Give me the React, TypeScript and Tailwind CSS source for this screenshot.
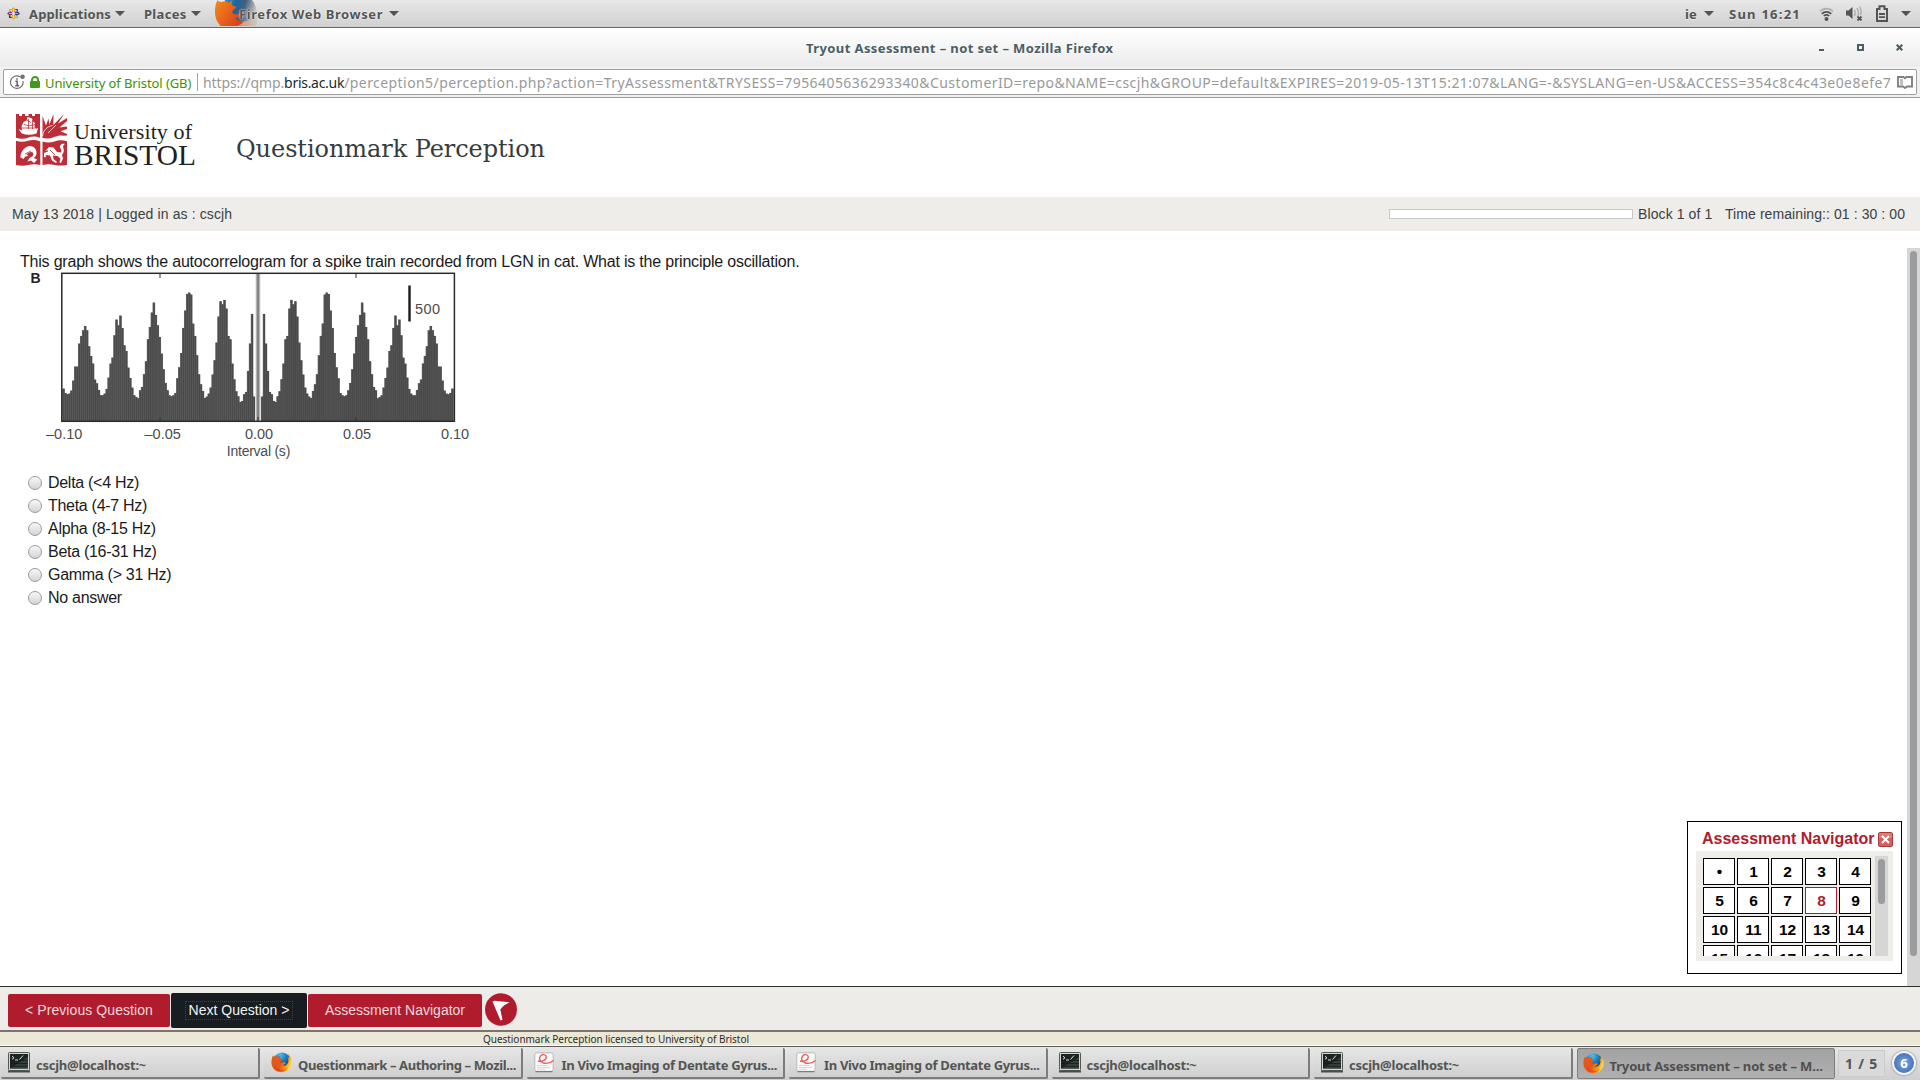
import type { ReactNode } from 'react';

const UI = "font-['Noto_Sans','Open_Sans',sans-serif]";
const PAGE = "font-['Liberation_Sans',Arial,sans-serif]";

function Caret({ className = '' }: { className?: string }) {
  return (
    <svg className={`h-[5px] w-[10px] shrink-0 ${className}`} viewBox="0 0 10 5">
      <path d="M0 0h10L5.6 4.6a.8.8 0 0 1-1.2 0z" fill="#535553" />
    </svg>
  );
}

function FirefoxLogo({ id, className = '' }: { id: string; className?: string }) {
  return (
    <svg className={`shrink-0 ${className}`} viewBox="0 0 40 40">
      <defs>
        <radialGradient id={`${id}g`} cx="0.4" cy="0.15" r="0.8">
          <stop offset="0" stopColor="#4fc4ee" />
          <stop offset="0.4" stopColor="#1f83c4" />
          <stop offset="1" stopColor="#0b2a5c" />
        </radialGradient>
        <linearGradient id={`${id}f`} x1="0" y1="0.2" x2="1" y2="0.5">
          <stop offset="0" stopColor="#e2591c" />
          <stop offset="0.5" stopColor="#e8551a" />
          <stop offset="0.8" stopColor="#f7a11b" />
          <stop offset="1" stopColor="#fde14a" />
        </linearGradient>
      </defs>
      <circle cx="21" cy="18" r="17" fill={`url(#${id}g)`} />
      <path
        d="M3.500 6.500C5 8 6 8.600 8 8.800c2.400-.8 4.500-.6 6.500.2 1-1.600 2.600-2.800 4.500-3.400-1.600 2-2.300 3.600-2 5.600 1 1.400 3 1.600 5 1.800-.4 1.900-3.600 2.700-4.200 4.200-.6 1.400.6 2.600 1.200 3 2.600 1 4.800-1.400 7.500-.6 1.800.6 1.600 2.200.5 2.600-2 .8-2.700 3-6 3.200 5.500 1.800 11.500-1.600 12.200-8 .4-4-1-6.400-2.200-8.400 2 .8 3.400 2.200 4 4-.1-4-1.400-7.500-4-10 5.500 3.500 8.600 9.400 8.500 16C39.300 30.500 31 38.600 20 38.600 9 38.600.8 30.500.8 20 .8 15 2 10.500 3.500 6.500z"
        fill={`url(#${id}f)`}
      />
      <path d="M7 20c.6 8 6.400 14 14 14 5 0 9-2 11.500-5-2 5-7 8-12.500 8C11.500 37 5 29 7 20z" fill="#c93414" opacity=".45" />
    </svg>
  );
}

/* Enlarged launcher icon of the focused application, cut off by the panel's edge. */
function PanelAppIcon() {
  return (
    <svg className="h-[26px] w-[43px]" viewBox="216 0 43 26">
      <defs>
        <linearGradient id="panelGlobe" x1="0" y1="0" x2="1" y2="0.2">
          <stop offset="0" stopColor="#2aa0dc" />
          <stop offset="0.4" stopColor="#17669f" />
          <stop offset="0.65" stopColor="#44607e" />
          <stop offset="0.85" stopColor="#929aa4" />
          <stop offset="1" stopColor="#c9c9c4" />
        </linearGradient>
        <linearGradient id="panelFox" x1="0" y1="0" x2="1" y2="0.6">
          <stop offset="0" stopColor="#f08a1e" />
          <stop offset="0.5" stopColor="#e9661b" />
          <stop offset="1" stopColor="#d8421c" />
        </linearGradient>
        <linearGradient id="panelTail" x1="0" y1="0" x2="1" y2="0">
          <stop offset="0" stopColor="#e0501c" />
          <stop offset="0.5" stopColor="#d49a80" />
          <stop offset="1" stopColor="#cdc6ba" />
        </linearGradient>
      </defs>
      <path d="M226 0h27c5 6 6.500 17 4.500 26h-34z" fill="url(#panelGlobe)" />
      <path d="M228 26c3-3 8-4.500 13-4.500 6 0 12-1 16-5 .5 3 .5 6 0 9.500z" fill="url(#panelTail)" />
      <path
        d="M218.500 0c.8 1.300 2 2 3.500 2 3-.8 6-.5 8.500.5.8-1.200 1.800-2 3-2.500-.6 2-1 3.600-.5 5.200 1.300 1 3 1.200 4.500 1.600-.5 2-3.500 2.700-4 4.200-.5 1.600.6 2.700 1.600 3.200 2.400.7 4.400-1 6.900-.4-1 3-3 4-6 4.500 3 2.300 6 3 9 2.800-2 2.700-5 4.900-8 4.900h-15.500c-4-4.500-5.500-9-5.500-14.500 0-4.500.8-8 2.500-11.500z"
        fill="url(#panelFox)"
      />
    </svg>
  );
}

function TerminalIcon() {
  return (
    <svg className="h-[21px] w-[22px] shrink-0" viewBox="0 0 22 21">
      <rect x="0.5" y="0.5" width="21" height="18" rx="1" fill="#d3d5d0" stroke="#555753" />
      <rect x="2" y="2" width="18" height="14.500" fill="#1d2523" />
      <path d="M2 16.500 20 5v11.500z" fill="#35403c" />
      <path d="M2 8.500h18M2 11.500h18M2 14.200h18" stroke="#111816" strokeWidth=".7" />
      <path d="M4 4.200 6 5.800 4 7.300M7 8h3M11.500 7.500 15 3.500" fill="none" stroke="#dfe3df" strokeWidth="1" />
      <rect x="0" y="18.500" width="22" height="2" fill="#4a4c49" />
    </svg>
  );
}

function DocIcon() {
  return (
    <svg className="h-[21px] w-[20px] shrink-0" viewBox="0 0 20 21">
      <rect x="0.800" y="0.800" width="18.400" height="18.600" rx="2" fill="#fafafa" stroke="#b9b9b7" />
      <path d="M1.500 19.600h17" stroke="#7a7c79" strokeWidth="1.400" />
      <path d="M3 13.500h11M3 15.500h13M3 17.300h8" stroke="#cfcfcf" strokeWidth=".8" />
      <path
        d="M4 9C8 10.500 12.500 7.500 12.200 4.800 12 2.200 8.500 1.800 6.500 4c-1.900 2.500-.6 5.600 3 7 3.500 1 6.500.4 10-2.500"
        fill="none"
        stroke="#e8605f"
        strokeWidth="1.400"
      />
    </svg>
  );
}

function TopBar() {
  return (
    <div
      className={`flex h-[28px] shrink-0 items-center border-b border-[#656565] bg-linear-to-b from-[#e8e8e8] to-[#d0d0d0] text-[13px] leading-[27px] font-bold whitespace-nowrap text-[#535553] [text-shadow:0_1px_0_rgba(255,255,255,0.5)] ${UI}`}
    >
      <svg className="ml-[7px] h-[13px] w-[13px]" viewBox="0 0 13 13">
        <path d="M6.500 0 8.500 2.200v3.300h-4V2.200z" fill="#efa724" />
        <path d="M6.500 13 4.500 10.800V7.500h4v3.300z" fill="#e9b33b" />
        <path d="M0 6.500 2.200 4.500h3.300v4H2.200z" fill="#8e3b84" />
        <path d="M13 6.500 10.800 8.500H7.500v-4h3.300z" fill="#3a3a86" />
        <path d="M2 2h3.200L2 5.200z" fill="#9ccd2a" />
        <path d="M11 2v3.200L7.800 2z" fill="#932279" />
        <path d="M2 11V7.800L5.200 11z" fill="#262577" />
        <path d="M11 11H7.800L11 7.800z" fill="#9ccd2a" />
        <path d="M6.500 2v9M2 6.500h9M3.300 3.300l6.400 6.400M9.700 3.300 3.300 9.700" stroke="#eee" strokeWidth=".6" />
      </svg>
      <span className="mt-[2px] ml-[9px] w-[86px] tracking-[0.14px]">Applications</span>
      <Caret />
      <span className="mt-[2px] ml-[19px] w-[47px] tracking-[0.3px]">Places</span>
      <Caret />
      <div className="ml-[14px] w-[46px] self-start">
        <PanelAppIcon />
      </div>
      <span className="relative mt-[2px] -ml-[22px] w-[150px] tracking-[0.58px] [text-shadow:0_0_2px_rgba(255,255,255,0.9),0_0_1px_rgba(255,255,255,0.9)]">
        Firefox Web Browser
      </span>
      <Caret />
      <div className="flex-1" />
      <span className="mt-[2px] w-[19px] tracking-[0.18px]">ie</span>
      <Caret />
      <span className="mt-[2px] ml-[15px] w-[90px] tracking-[1.24px]">Sun 16:21</span>
      <svg className="h-[14px] w-[15px]" viewBox="0 0 15 14" fill="none">
        <path d="M1 4.500C4.500.7 10.500.7 14 4.500" stroke="#b0b0b0" strokeWidth="1.800" />
        <path d="M2.800 6.800c2.600-2.700 6.800-2.700 9.400 0" stroke="#535553" strokeWidth="1.800" />
        <path d="M4.800 9c1.600-1.400 3.800-1.400 5.400 0" stroke="#535553" strokeWidth="1.600" />
        <circle cx="7.500" cy="12" r="2" fill="#535553" />
      </svg>
      <svg className="ml-[12px] h-[15px] w-[17px]" viewBox="0 0 17 15" fill="none">
        <path d="M0 4.500h2.500L6.500 1v12L2.500 9.500H0z" fill="#535553" />
        <path d="M8.500 4q1.600 3 0 6M11 2q2.600 5 .5 9M13.500.5Q16 5 14.500 9" stroke="#b0b0b0" strokeWidth="1.500" />
        <path d="m11.500 10.500 4 4m0-4-4 4" stroke="#535553" strokeWidth="1.800" />
      </svg>
      <svg className="ml-[13px] h-[17px] w-[12px]" viewBox="0 0 12 17" fill="none">
        <path d="M1 4h2.500V1.200h5V4H11v12H1z" stroke="#535553" strokeWidth="2" />
        <path d="M3 9h6M3 12.200h6" stroke="#535553" strokeWidth="1.800" />
      </svg>
      <Caret className="mr-[9px] ml-[13px]" />
    </div>
  );
}

function TitleBar() {
  return (
    <div className={`flex h-[40px] shrink-0 items-center border-b border-[#f4f4f4] bg-linear-to-b from-white to-[#ebebeb] ${UI}`}>
      <div className="w-[806px]" />
      <span className="mt-[2px] w-[308px] text-[13px] leading-[37px] font-bold tracking-[0.4px] whitespace-nowrap text-[#4b5d65] [text-shadow:0_1px_0_#fff]">
        Tryout Assessment – not set – Mozilla Firefox
      </span>
      <div className="flex-1" />
      <div className="mt-[4px] h-[2px] w-[5px] bg-[#4b5d65]" />
      <div className="ml-[33px] h-[7px] w-[7px] border-2 border-[#4b5d65]" />
      <svg className="mr-[17px] ml-[32px] h-[7px] w-[7px]" viewBox="0 0 7 7">
        <path d="m.7.7 5.600 5.600M6.300.7.7 6.300" stroke="#4b5d65" strokeWidth="2.100" />
      </svg>
    </div>
  );
}

function AddressBar() {
  return (
    <div className="h-[30px] shrink-0 border-b border-[#9b9b9b] bg-[#f0f0f0] px-[3px] pt-[1px]">
      <div className={`flex h-[26px] items-center rounded-[2px] border border-[#a0a0a0] bg-white leading-[22px] whitespace-nowrap ${UI}`}>
        <svg className="-mt-[1px] ml-[6px] h-[16px] w-[15px] shrink-0" viewBox="0 0 15 16" fill="none">
          <path d="M10 2.700A6.300 6.300 0 1 0 13 7" stroke="#6f6f6f" strokeWidth="1.200" />
          <circle cx="12.500" cy="2.800" r="2.300" fill="#6f6f6f" />
          <path d="M7 4.200v1.600M5.500 7.200h1.700v4.300M5.300 11.700h3.700" stroke="#5f5f5f" strokeWidth="1.500" />
        </svg>
        <svg className="ml-[5px] h-[12px] w-[10px] shrink-0" viewBox="0 0 10 12">
          <path d="M2 5.500V4a3 3 0 0 1 6 0v1.500" fill="none" stroke="#3f9a1c" strokeWidth="1.900" />
          <rect y="5" width="10" height="7" rx="1" fill="#3f9a1c" />
        </svg>
        <span className="mt-[1px] ml-[5px] w-[152px] text-[13px] tracking-[-0.09px] text-[#3d9400]">University of Bristol (GB)</span>
        <div className="h-[18px] w-px bg-[#a3a3a3]" />
        <span className="mt-[2px] ml-[5px] w-[1693px] text-[14px] text-[#999]">
          <span className="tracking-[-0.1px]">https://qmp.</span>
          <span className="tracking-[-0.29px] text-[#202a2e]">bris.ac.uk</span>
          <span className="tracking-[0.431px]">
            /perception5/perception.php?action=TryAssessment&amp;TRYSESS=7956405636293340&amp;CustomerID=repo&amp;NAME=cscjh&amp;GROUP=default&amp;EXPIRES=2019-05-13T15:21:07&amp;LANG=-&amp;SYSLANG=en-US&amp;ACCESS=354c8c4c43e0e8efe7
          </span>
        </span>
        <svg className="ml-px h-[13px] w-[16px] shrink-0" viewBox="0 0 16 13" fill="none">
          <path d="M1 1h5.500L8 2.200 9.500 1H15v9.500h-5L8 12l-2-1.500H1z" stroke="#808080" strokeWidth="1.900" />
          <path d="M3 4h3M3 6h3M3 8h3" stroke="#808080" />
        </svg>
      </div>
    </div>
  );
}

function BristolLogo() {
  return (
    <svg className="h-[60px] w-[188px]" viewBox="14 112 188 60">
      <g fill="#be2e38">
        <path d="M16 114h3v2h3v-2h3v2h3.500v-2h3.500v2h3v-2h5v23.800c-4-1.600-8-1.600-12 0-4 1.400-8 1.200-12 0z" />
        <path d="M16 140.800c4 1.200 8 1.200 12 0 4-1.200 8-1 12.300.6V165c-4-1-8-1-12 0s-8.300.8-12.300 0z" />
        <path d="M42.500 141.400c4 1.400 8 1.200 12 0 4-1.400 8-1.400 12.500-.2V165c-4 .8-8.300.8-12.300 0-4-1-8-1-12.200 0z" />
        <path d="M42.500 138v-22l3.500 9.500 2.500-7 .8 6L53.500 114l-.2 11 10.700-11-6 9.500 9-5.500v3l-7.500 6.500 7.500-1v2.500l-6.500 2.200L67 134v1.500l-4 .2c-3.500-.4-5.500.5-9 1.300-4 1.800-8 1.800-11.500 1z" />
      </g>
      <path d="M42.500 136c1-6 4.500-9.500 10-10.500M48 133l8-8" stroke="#fff" strokeWidth=".7" fill="none" />
      <g fill="#fff">
        <path d="M18.500 129l3.500 1.500-.5-4 2-4.500 3-1.500 1-3.500 4.500 1.500 1 3 2 1.500-.5 4 1.500 1.500 2-.5-1.500 5.500c-5 1.600-10 1.700-14.700 0z" />
        <path d="M20.500 157.500c-.3-5 3.500-10.500 9-11.500 4.500-.3 7.300 3.500 7 7.500-.3 2.400-1.500 3.600-2.800 4.500l3.600 1.500-3.300 3.500-3-2.500-3.500 1 2-3.500c2.600-1.200 4.600-3 3.600-5-1.500-2-4.800-.5-6.500 1.500l2 1.500-3.500.5-1.300 2.500z" />
        <path d="M45 151.500l4-4.500 4.500.5 3.500 4.500 4 .5c1.500-3-1.500-4-1-6.500.8-2.200 3-2.500 5-2-1.500 1-2.500 2-1.500 4.500 1 3-.5 5-1.500 6.500l1 3.500-2 4.500-1.500-.5 1-4-3-2.500-4.500-.5.500 3.500 3.500 3-1 1-4-2.500-2-5-4-.5-.5 2.500-1.500-.5v-4l4-1.500-.5-1.500z" />
      </g>
      <path d="M21 128h16M26 119.500l5 3M24 124.500c4 1.500 7 1.300 11 0M28.500 119v10M32.500 120v9M25 154l6-3M50 150l5 5" stroke="#be2e38" strokeWidth=".8" fill="none" />
      <g fill="#231f20" fontFamily="'Liberation Serif', serif">
        <text x="74" y="138.700" fontSize="22" textLength="118" lengthAdjust="spacing">University of</text>
        <text x="74" y="165" fontSize="29" textLength="122" lengthAdjust="spacingAndGlyphs">BRISTOL</text>
      </g>
    </svg>
  );
}

function PageHeader() {
  return (
    <header className="flex h-[99px] shrink-0 items-start bg-white">
      <div className="mt-[14px] ml-[14px]">
        <BristolLogo />
      </div>
      <h1 className="mt-[35px] ml-[34px] font-['DejaVu_Serif',serif] text-[24px] leading-[32px] tracking-[-0.07px] whitespace-nowrap text-[#363c3e]">
        Questionmark Perception
      </h1>
    </header>
  );
}

function InfoBar() {
  return (
    <div className={`flex h-[34px] shrink-0 items-center bg-[#eeede9] text-[14px] leading-[34px] whitespace-nowrap text-[#3a4143] ${PAGE}`}>
      <span className="ml-[12px] tracking-[0.12px]">May 13 2018 | Logged in as : cscjh</span>
      <div className="flex-1" />
      <div className="h-[10px] w-[244px] border border-[#c8c9cd] bg-white" />
      <span className="ml-[5px] w-[87px] tracking-[0.1px]">Block 1 of 1</span>
      <span className="w-[195px] tracking-[0.08px]">Time remaining:: 01 : 30 : 00</span>
    </div>
  );
}

/* Bin tops from -0.10 s up to the centre, in thirds of a pixel, with the axis at 544. */
const TOPS = [
  446, 459, 463, 461, 452, 422, 380, 380, 311, 288, 271, 258, 271, 319, 348, 371, 419, 430, 450, 466, 466, 461, 447, 413,
  371, 353, 286, 239, 256, 227, 264, 316, 333, 383, 414, 443, 466, 471, 475, 451, 441, 403, 364, 298, 261, 218, 188, 225,
  256, 291, 341, 388, 429, 451, 466, 469, 466, 459, 415, 382, 339, 264, 212, 162, 158, 164, 251, 288, 346, 403, 433, 453,
  474, 470, 461, 443, 404, 361, 308, 230, 184, 193, 180, 206, 288, 298, 371, 418, 454, 469, 486, 483, 463, 456, 393, 311,
  222, 470,
];
const BIN = 1.963;
const BARS = TOPS.flatMap((t, i) => {
  const h = (544 - t) / 3;
  const left = 62.2 + (i + 0.2) * BIN;
  return [
    { x: left, h },
    { x: 516 - left - BIN, h },
  ];
});

function Correlogram() {
  const ticks: [number, string][] = [
    [64.2, '–0.10'],
    [162.7, '–0.05'],
    [259, '0.00'],
    [357, '0.05'],
    [455, '0.10'],
  ];
  return (
    <svg className="h-[190px] w-[480px]" viewBox="20 271 480 190" fontFamily="'Liberation Sans', Arial, sans-serif">
      <text x="30.500" y="283.300" fontSize="14" fontWeight="700" fill="#222">B</text>
      {BARS.map((b, i) => (
        <g key={i}>
          <rect x={b.x - 0.35} y={421.3 - b.h} width={BIN + 0.7} height={b.h} fill="#4a4a4a" opacity=".5" />
          <rect x={b.x} y={421.3 - b.h} width={BIN + 0.1} height={b.h} fill="#4a4a4a" />
          <rect x={b.x} y={421.3 - b.h} width="0.600" height={b.h} fill="#5e5e5e" />
        </g>
      ))}
      <rect x="255.300" y="273" width="5.400" height="148" fill="#e4e4e4" />
      <rect x="256.500" y="273" width="3" height="148" fill="#848484" />
      <path d="M160 273v5M356 273v5M160 421v-4M258 421v-4M356 421v-4" stroke="#333" strokeWidth="1" />
      <rect x="61.800" y="273.300" width="392.600" height="148" fill="none" stroke="#2b2b2b" strokeWidth="1.500" />
      <rect x="408.300" y="285.500" width="2.400" height="36" fill="#1b1b1b" />
      <g fontSize="14.500" fill="#4c4c4c">
        <text x="415" y="313.500" textLength="25">500</text>
        {ticks.map(([x, label]) => (
          <text key={label} x={x} y="438.500" textAnchor="middle">{label}</text>
        ))}
        <text x="226.800" y="456" fontSize="14" textLength="63.500">Interval (s)</text>
      </g>
    </svg>
  );
}

const OPTIONS = ['Delta (<4 Hz)', 'Theta (4-7 Hz)', 'Alpha (8-15 Hz)', 'Beta (16-31 Hz)', 'Gamma (> 31 Hz)', 'No answer'];

function Question() {
  return (
    <div className={`flex flex-1 flex-col items-start pt-[22px] pl-[20px] text-[16px] whitespace-nowrap text-[#1a1a1a] ${PAGE}`}>
      <p className="h-[18px] leading-[18px] tracking-[-0.205px]">
        This graph shows the autocorrelogram for a spike train recorded from LGN in cat. What is the principle oscillation.
      </p>
      <Correlogram />
      <div className="mt-[10px]">
        {OPTIONS.map((o) => (
          <div key={o} className="flex h-[23px] items-center">
            <span className="ml-[8px] h-[14px] w-[14px] rounded-full border border-[#9b9b9b] bg-linear-to-b from-[#f8f8f8] to-[#d4d4d4]" />
            <span className="ml-[6px] leading-[23px] tracking-[-0.29px]">{o}</span>
          </div>
        ))}
      </div>
    </div>
  );
}

function NavigatorPanel() {
  const cells = ['•', ...Array.from({ length: 19 }, (_, i) => String(i + 1))];
  return (
    <div className={`absolute right-[18px] bottom-[12px] h-[153px] w-[215px] border border-black bg-white ${PAGE}`}>
      <div className="flex h-[29px] items-center pt-[4px] pl-[14px]">
        <span className="w-[176px] text-[16px] leading-[25px] font-bold whitespace-nowrap text-[#b01c2e]">Assessment Navigator</span>
        <svg className="mt-[1px] h-[15px] w-[15px] shrink-0" viewBox="0 0 15 15">
          <rect x=".5" y=".5" width="14" height="14" rx="1.500" fill="#d35f5f" stroke="#a93a3a" />
          <path d="M1 1h13v5H1z" fill="#e08d8a" opacity=".6" />
          <path d="m4 4 7 7m0-7-7 7" stroke="#fff" strokeWidth="2" />
        </svg>
      </div>
      <div className="ml-[8px] flex h-[110px] w-[197px] bg-[#eeede9] pt-[5px]">
        <div className="h-[100px] w-[179px] overflow-hidden pt-[2px] pl-[7px]">
          <div className="grid grid-cols-[repeat(5,32px)] gap-[2px]">
            {cells.map((c) => (
              <div
                key={c}
                className={
                  c === '8'
                    ? 'h-[27px] border border-[#b01c2e] bg-white pl-px text-center text-[15.500px] leading-[26px] font-bold text-[#b01c2e]'
                    : 'h-[27px] border border-black bg-white pl-px text-center text-[15.500px] leading-[26px] font-bold text-black'
                }
              >
                {c}
              </div>
            ))}
          </div>
        </div>
        <div className="h-[100px] w-[13px] bg-[#d6d6d6] pt-[3px] pl-[3px]">
          <div className="h-[45px] w-[7px] rounded-full bg-[#9b9c9e]" />
        </div>
      </div>
    </div>
  );
}

function FooterButtons() {
  const base = 'flex items-center justify-center rounded-[2px] whitespace-nowrap';
  return (
    <div className={`flex h-[44px] shrink-0 items-start border-t border-[#2e2e2e] bg-[#eeece9] pt-[6px] pl-[8px] text-[14px] text-[#f2d8db] ${PAGE}`}>
      <button className={`${base} mt-[1px] h-[33px] w-[162px] bg-[#b01c2e] tracking-[0.08px]`}>&lt; Previous Question</button>
      <button className={`${base} ml-[1px] h-[35px] w-[136px] bg-[#171d20] text-[#f4f4f4]`}>
        <span className="border border-dotted border-[#3c4245] px-[3px] leading-[17px]">Next Question &gt;</span>
      </button>
      <button className={`${base} mt-[1px] ml-[1px] h-[33px] w-[174px] bg-[#b01c2e]`}>Assessment Navigator</button>
      <svg className="ml-[3px] h-[33px] w-[32px]" viewBox="0 0 32 33">
        <ellipse cx="16" cy="16.500" rx="16" ry="16.300" fill="#b01c2e" />
        <path d="M7.500 8.600 9.500 7.700 24.500 9.200C21 11 17.500 13 15.300 16.500l2.200 10.300-2 .7z" fill="#fff" />
      </svg>
    </div>
  );
}

function Task({ icon, label, first, active, text }: { icon: ReactNode; label: string; first?: boolean; active?: boolean; text: string }) {
  return (
    <div
      className={`mr-[4px] flex h-[31px] shrink-0 items-center overflow-hidden rounded-[2px] pl-[7px] ${first ? 'w-[259px]' : 'w-[258.500px]'} ${
        active
          ? 'border border-[#7d7d7d] bg-linear-to-b from-[#a2a2a2] to-[#b0b0b0] text-[#4f4f4f]'
          : 'border-r-2 border-b-2 border-[#7c7c7c] bg-linear-to-b from-[#e6e6e6] to-[#cfcfcf] text-[#535553]'
      }`}
    >
      {icon}
      <span className={`mt-[5px] ${text}`}>{label}</span>
    </div>
  );
}

function Taskbar() {
  const term = { icon: <TerminalIcon />, label: 'cscjh@localhost:~', text: 'ml-[6px] tracking-[-0.24px]' };
  const doc = { icon: <DocIcon />, label: 'In Vivo Imaging of Dentate Gyrus...', text: 'ml-[8px] tracking-[-0.32px]' };
  return (
    <div
      className={`flex h-[34px] shrink-0 items-start overflow-hidden border-t border-[#5c5c5c] bg-linear-to-b from-[#e8e8e8] to-[#cfcfcf] pt-[1px] pl-[1px] text-[13px] leading-[20px] font-bold whitespace-nowrap ${UI}`}
    >
      <Task {...term} first />
      <Task icon={<FirefoxLogo id="t2" className="h-[21px] w-[21px]" />} label="Questionmark – Authoring – Mozil..." text="ml-[6px] tracking-[-0.38px]" />
      <Task {...doc} />
      <Task {...doc} />
      <Task {...term} />
      <Task {...term} />
      <Task icon={<FirefoxLogo id="t7" className="-ml-[2px] h-[21px] w-[21px]" />} label="Tryout Assessment – not set – M..." text="ml-[6px] tracking-[-0.15px]" active />
      <div className="mt-[2px] -ml-px flex h-[27px] w-[47px] items-center justify-center border border-[#cbcbcb] bg-[#dadada] text-[14px] tracking-[0.78px] text-[#535553]">1 / 5</div>
      <div className="mt-[3px] ml-[7px] flex h-[24px] w-[24px] items-center justify-center rounded-full border-2 border-[#f2f2f2] bg-radial from-[#7fa8dc] to-[#2f62ae] text-[13px] text-white shadow-[0_0_2px_#555]">6</div>
    </div>
  );
}

export default function App() {
  return (
    <div className="flex h-[1080px] w-[1920px] flex-col overflow-hidden bg-white">
      <TopBar />
      <TitleBar />
      <AddressBar />
      <PageHeader />
      <InfoBar />
      <main className="relative flex min-h-0 flex-1 bg-white">
        <Question />
        <div className="mt-[17px] w-[13px] bg-[#d6d6d6] pt-[3px] pl-[3px]">
          <div className="h-[705px] w-[7px] rounded-full bg-[#9b9c9e]" />
        </div>
        <NavigatorPanel />
      </main>
      <FooterButtons />
      <div className={`h-[16px] shrink-0 border-t-2 border-b border-t-[#7b736c] border-b-white bg-[#ebe8d8] pl-[483px] text-[10px] leading-[14px] tracking-[-0.04px] whitespace-nowrap text-[#2b2b2b] ${UI}`}>
        Questionmark Perception licensed to University of Bristol
      </div>
      <Taskbar />
    </div>
  );
}
